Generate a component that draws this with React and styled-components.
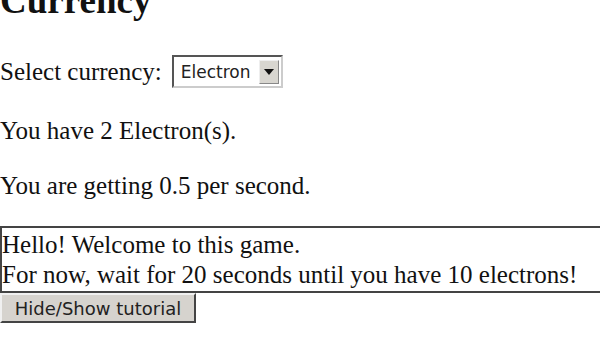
import React, { useState } from 'react';
import styled, { createGlobalStyle } from 'styled-components';

const Global = createGlobalStyle`
	html, body {
		margin: 0;
		padding: 0;
		background: #fff;
		overflow: hidden;
	}
	body {
		font-family: "Liberation Serif", "Times New Roman", serif;
		font-size: 25px;
		color: #111;
	}
`;

const Page = styled.div`
	margin-top: -19px;
`;

const Heading = styled.h1`
	font-size: 37px;
	font-weight: bold;
	margin: 0 0 34px 0;
	line-height: 40px;
`;

const Line = styled.p`
	margin: 0;
	line-height: 30px;
	height: ${(p) => p.h || 30}px;
	display: flex;
	align-items: center;
`;

const Spacer = styled.div`
	height: ${(p) => p.h}px;
`;

const SelectBox = styled.div`
	display: inline-flex;
	align-items: center;
	margin-left: 10px;
	width: 111px;
	height: 33px;
	box-sizing: border-box;
	border: 2px solid #555;
	border-right-color: #ccc;
	border-bottom-color: #ccc;
	background: #fff;
	font-family: "DejaVu Sans", Tahoma, sans-serif;
	font-size: 17px;
	color: #222;
	padding-left: 7px;
`;

const SelectText = styled.span`
	flex: 1;
`;

const Arrow = styled.span`
	width: 20px;
	height: 24px;
	margin-right: 2px;
	background: #d8d6d0;
	display: flex;
	align-items: center;
	justify-content: center;
	box-sizing: border-box;
	border: 1px solid #eee;
	border-right-color: #888;
	border-bottom-color: #888;
	&::after {
		content: '';
		border-left: 5px solid transparent;
		border-right: 5px solid transparent;
		border-top: 6px solid #111;
	}
`;

const Tutorial = styled.div`
	border: 2px solid #444;
	border-right: none;
	width: 640px;
	padding: 2px 0 0 0;
	height: 67px;
	box-sizing: border-box;
	line-height: 30px;
`;

const Toggle = styled.button`
	display: block;
	width: 196px;
	height: 30px;
	margin: 0;
	padding: 0;
	background: #d6d3ce;
	border: 2px solid #f0f0f0;
	border-right-color: #444;
	border-bottom-color: #444;
	font-family: "DejaVu Sans", Tahoma, sans-serif;
	font-size: 18px;
	color: #222;
`;

export default function App() {
	const [show, setShow] = useState(true);
	return (
		<>
			<Global />
			<Page>
				<Heading>Currency</Heading>
				<Line h={33}>
					Select currency:
					<SelectBox>
						<SelectText>Electron</SelectText>
						<Arrow />
					</SelectBox>
				</Line>
				<Spacer h={28} />
				<Line>You have 2 Electron(s).</Line>
				<Spacer h={25} />
				<Line>You are getting 0.5 per second.</Line>
				<Spacer h={25} />
				{show && (
					<Tutorial>
						Hello! Welcome to this game.
						<br />
						For now, wait for 20 seconds until you have 10 electrons!
					</Tutorial>
				)}
				<Toggle onClick={() => setShow(!show)}>Hide/Show tutorial</Toggle>
			</Page>
		</>
	);
}
